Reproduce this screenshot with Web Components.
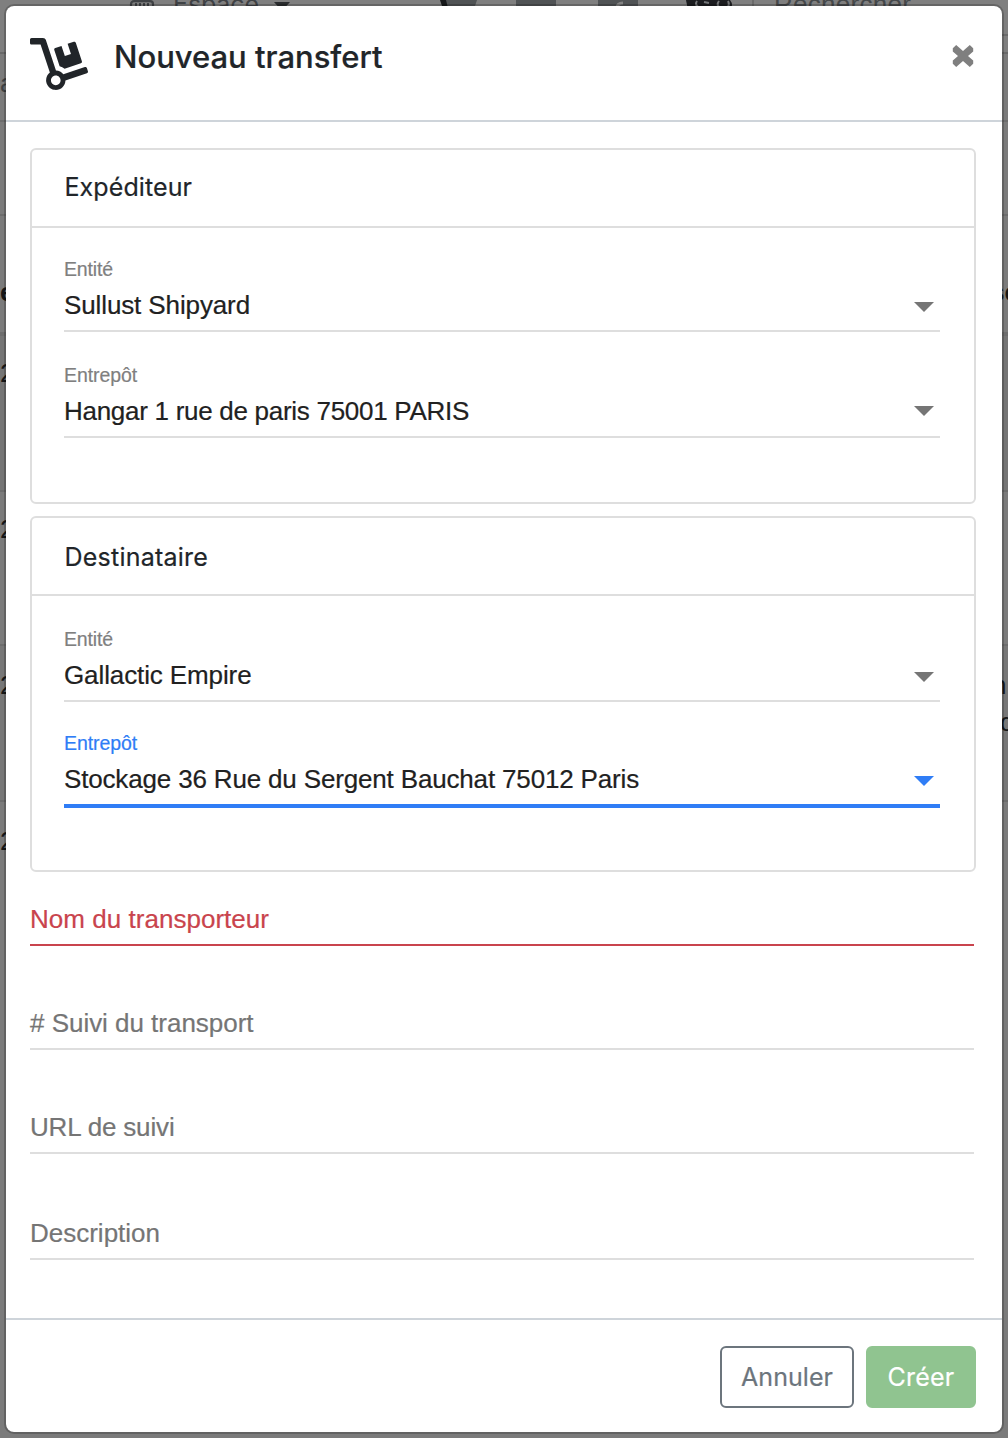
<!DOCTYPE html>
<html lang="fr">
<head>
<meta charset="utf-8">
<title>Nouveau transfert</title>
<style>
html,body{margin:0;height:100%;overflow:hidden;background:#7b7b7b}
body{font-family:"Liberation Sans",sans-serif;color:#212529}
</style>
</head>
<body>
<transfer-page></transfer-page>
<script>
const define = (name, html, setup) => customElements.define(name, class extends HTMLElement {
  connectedCallback() {
    if (this.shadowRoot) return;
    const t = document.createElement('template');
    t.innerHTML = html;
    this.attachShadow({mode: 'open'}).append(t.content.cloneNode(true));
    if (setup) setup(this);
  }
});

/* Text whose letter-spacing is adjusted to a given advance width. */
define('fit-text', `<style>:host{display:inline-block;white-space:pre;-webkit-text-stroke:.2px currentColor}</style><slot></slot>`, el => {
  const want = parseFloat(el.getAttribute('w'));
  const fit = () => {
    el.style.letterSpacing = '0px';
    const have = el.getBoundingClientRect().width;
    el.style.letterSpacing = ((want - have) / el.textContent.length) + 'px';
  };
  fit();
});

define('backdrop-row', `<style>
:host{display:flex;justify-content:space-between;box-sizing:border-box;height:var(--h);background:var(--bg,#7b7b7b);border-bottom:var(--bw,2px) solid #6d6d6d;font:26px/30px "Liberation Sans",sans-serif;color:#161718;overflow:hidden}
div{width:8px;padding-top:var(--pt,0);white-space:pre}
.r{width:13px;padding-top:var(--pr,0)}
</style><div><slot name="l"></slot></div><div class="r"><slot name="r"></slot></div>`);

define('page-backdrop', `<style>
:host{display:block;height:1438px;overflow:hidden;background:#7b7b7b}
.nav{display:flex;height:54px;box-sizing:border-box;background:#7f7f7f;border-bottom:2px solid #696969;overflow:hidden}
.nav svg{flex:none}
</style>
<div class="nav"><svg width="1008" height="52" viewBox="0 0 1008 52">
<rect x="131" y="1.2" width="22" height="18" rx="3" fill="none" stroke="#3f4245" stroke-width="2.2"/>
<path d="M136 3v5M140 3v5M144 3v5M148 3v5" stroke="#3f4245" stroke-width="2"/>
<text x="173" y="13" font-family="Inter" font-size="25" fill="#3f4245" textLength="86">Espace</text>
<path d="M274 2h16l-8 9z" fill="#2b2d2f"/>
<path d="M443 0h34l-4 12h-27z" fill="#505355"/><path d="M440 0h6l3 12h-5z" fill="#17191b"/>
<path d="M516 0h40v14h-40zM598 0h40v14h-40z" fill="#505355"/>
<path d="M617 8q0-5 6-5" fill="none" stroke="#828282" stroke-width="3"/>
<path d="M686 0h44q4 5 0 10h-42z" fill="#1c1d20"/>
<path d="M697 1q-3 4 3 7M704 2l5 1M719 1q-3 4 1 7M728 1q2 4-1 7" fill="none" stroke="#747678" stroke-width="2"/>
<path d="M753 0v30M900 35h108" stroke="#6b6b6b" stroke-width="2"/>
<text x="774" y="13" font-family="Liberation Sans" font-size="26" fill="#45484a" textLength="137">Rechercher</text>
</svg></div>
<backdrop-row style="--h:68px;--pt:14px"><span slot="l" style="color:#3f4244">a</span></backdrop-row>
<backdrop-row style="--h:94px"></backdrop-row>
<backdrop-row style="--h:120px;--pt:61px;--pr:61px;--bw:4px"><b slot="l">e</b><b slot="r" style="margin-left:-5px">se</b></backdrop-row>
<backdrop-row style="--h:156px;--pt:22px;--bg:#757575"><span slot="l">2</span></backdrop-row>
<backdrop-row style="--h:154px;--pt:22px"><span slot="l">2</span></backdrop-row>
<backdrop-row style="--h:156px;--pt:24px;--pr:24px;--bg:#777"><span slot="l">2</span><span slot="r"><span style="display:block;margin-left:-3px;height:37px">n</span><span style="margin-left:5px">d</span></span></backdrop-row>
<backdrop-row style="--h:700px;--pt:24px"><span slot="l">2</span></backdrop-row>`);

define('dolly-icon', `<style>:host,svg{display:block}</style>
<svg width="58" height="52" viewBox="0 0 576 512" preserveAspectRatio="none" fill="#212529"><path d="M294.2 277.7c18 5 34.7 13.4 49.5 24.7l161.5-53.8c8.4-2.8 12.9-11.9 10.1-20.2L454.9 47.2c-2.8-8.4-11.9-12.9-20.2-10.1l-61.1 20.4 33.1 99.4L346 177l-33.1-99.4-61.6 20.5c-8.4 2.8-12.9 11.9-10.1 20.2l53 159.4zm281 48.7L565 296c-2.8-8.4-11.9-12.9-20.2-10.1l-213.5 71.2c-17.2-22-43.6-36.4-73.5-37L158.4 21.9C154 8.8 141.8 0 128 0H16C7.2 0 0 7.2 0 16v32c0 8.8 7.2 16 16 16h88.9l92.2 276.7c-26.1 20.4-41.7 53.6-36 90.5 6.1 39.4 37.9 72.3 77.3 79.2 60.2 10.7 112.3-34.8 113.4-92.6l213.3-71.2c8.3-2.8 12.9-11.8 10.1-20.2zM256 464c-26.5 0-48-21.5-48-48s21.5-48 48-48 48 21.5 48 48-21.5 48-48 48z"/></svg>`);

define('close-button', `<style>:host,svg{display:block}</style>
<svg width="22" height="22" viewBox="0 0 22 22" fill="#7f7f7f"><path d="M4.2 0 11 6.1 17.8 0 21.2 3.3V6.6L16 11 21.2 15.4V18.7L17.8 22 11 15.9 4.2 22 .8 18.7V15.4L6 11 .8 6.6V3.3Z"/></svg>`);

define('modal-header', `<style>
:host{display:flex;align-items:flex-start;box-sizing:border-box;height:116px;padding:32px 28px 0 24px;border-bottom:2px solid #ced4da}
h5{margin:0 auto 0 26px;font:500 31px/38px Inter,sans-serif}
close-button{margin-top:7px}
</style><dolly-icon></dolly-icon><h5><slot></slot></h5><close-button></close-button>`);

define('info-card', `<style>
:host{display:flex;flex-direction:column;box-sizing:border-box;height:356px;border:2px solid #dedede;border-radius:6px}
header{box-sizing:border-box;height:78px;padding:var(--hp) 32px 0 32.5px;border-bottom:2px solid #dedede;font:25px/30px Inter,sans-serif}
section{display:flex;flex-direction:column;gap:var(--gap);padding:var(--bp) 34px 0 32px}
</style><header><slot name="title"></slot></header><section><slot></slot></section>`);

define('select-field', `<style>
:host{display:flex;flex-direction:column;border-bottom:2px solid #dedede}
:host([focused]){border-bottom:4px solid #2f7df6}
label{height:22px;font-size:19.5px;line-height:22px;color:#7f7f7f}
.v{display:flex;justify-content:space-between;height:30px;margin:10px 0;padding-right:6px;font-size:26px;line-height:30px;color:#212121}
svg{display:block;margin-top:var(--arrow,12px);fill:#757575}
:host([focused]) label{color:#2f7df6}
:host([focused]) svg{fill:#2f7df6}
</style><label><slot name="label"></slot></label>
<div class="v"><slot></slot><svg width="20" height="10" viewBox="0 0 20 10"><path d="M0 0h20L10 10z"/></svg></div>`);

define('text-field', `<style>
:host{display:block;box-sizing:border-box;height:42px;border-bottom:2px solid #dedede;font-size:26px;line-height:30px;color:#757575}
:host([invalid]){color:#c9444d;border-color:#c9444d}
</style><slot></slot>`);

define('action-button', `<style>
:host{display:flex;justify-content:center;box-sizing:border-box;height:62px;padding-top:14px;border:2px solid #6c757d;border-radius:6px;color:#6c757d;font:25px/30px Inter,sans-serif}
:host([primary]){background:#90c490;border-color:#90c490;color:#fff}
</style><slot></slot>`);

define('modal-footer', `<style>
:host{display:flex;justify-content:flex-end;gap:12px;box-sizing:border-box;height:114px;margin-top:58px;padding:26px 26px 0;border-top:2px solid #ced4da}
</style><slot></slot>`);

define('modal-dialog', `<style>
:host{position:absolute;left:4px;top:4px;display:flex;flex-direction:column;box-sizing:border-box;width:1000px;height:1430px;background:#fff;background-clip:padding-box;border:2px solid rgba(0,0,0,.2);border-radius:10px}
</style><slot></slot>`);

define('transfer-page', `<style>
:host{display:block;height:1438px}
main{display:flex;flex-direction:column;padding:26px 28px 0 24px}
info-card{margin-right:-2px}
info-card + info-card{margin-top:12px}
</style>
<page-backdrop></page-backdrop>
<modal-dialog>
<modal-header><fit-text w="268.5">Nouveau transfert</fit-text></modal-header>
<main>
<info-card style="--hp:22px;--bp:30px;--gap:32px"><fit-text slot="title" w="127.5">Expéditeur</fit-text>
<select-field><fit-text slot="label" w="49">Entité</fit-text><fit-text w="186">Sullust Shipyard</fit-text></select-field>
<select-field style="--arrow:10px"><fit-text slot="label" w="73">Entrepôt</fit-text><fit-text w="405">Hangar 1 rue de paris 75001 PARIS</fit-text></select-field>
</info-card>
<info-card style="--hp:24px;--bp:32px;--gap:30px"><fit-text slot="title" w="143.5">Destinataire</fit-text>
<select-field><fit-text slot="label" w="49">Entité</fit-text><fit-text w="187.5">Gallactic Empire</fit-text></select-field>
<select-field focused><fit-text slot="label" w="73">Entrepôt</fit-text><fit-text w="575">Stockage 36 Rue du Sergent Bauchat 75012 Paris</fit-text></select-field>
</info-card>
<text-field invalid style="margin-top:32px"><fit-text w="239">Nom du transporteur</fit-text></text-field>
<text-field style="margin-top:62px"><fit-text w="223.5">&#35; Suivi du transport</fit-text></text-field>
<text-field style="margin-top:62px"><fit-text w="144.5">URL de suivi</fit-text></text-field>
<text-field style="margin-top:64px"><fit-text w="130">Description</fit-text></text-field>
</main>
<modal-footer>
<action-button style="width:134px"><fit-text w="92">Annuler</fit-text></action-button>
<action-button primary style="width:110px"><fit-text w="67">Créer</fit-text></action-button>
</modal-footer>
</modal-dialog>`);
</script>
</body>
</html>
